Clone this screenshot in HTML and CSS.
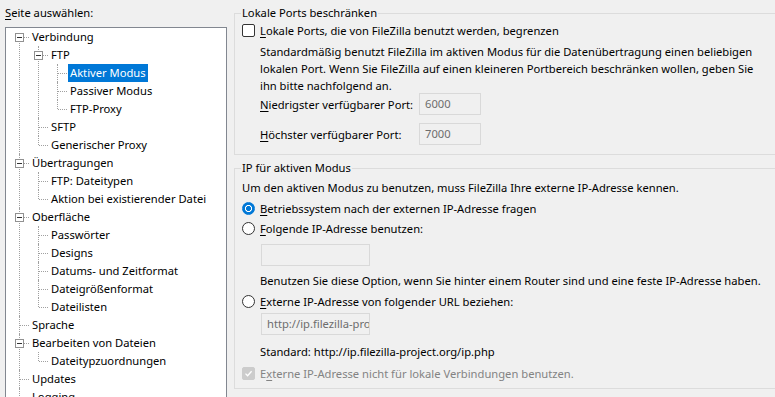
FILE: index.html
```html
<!DOCTYPE html>
<html lang="de">
<head>
    <meta charset="UTF-8">
    <title>Einstellungen - Aktiver Modus</title>
    <link rel="stylesheet" href="styles.css">
</head>
<body>
    <div class="window">
        <!-- Seitenauswahl -->
        <div class="side">
            <div class="side-label"><u>S</u>eite auswählen:</div>
            <div class="tree-box">
                <ul class="tree">
                    <li class="open"><span class="toggle"></span><span class="node">Verbindung</span>
                        <ul>
                            <li class="open"><span class="toggle"></span><span class="node">FTP</span>
                                <ul>
                                    <li><span class="node selected">Aktiver Modus</span></li>
                                    <li><span class="node">Passiver Modus</span></li>
                                    <li><span class="node">FTP-Proxy</span></li>
                                </ul>
                            </li>
                            <li><span class="node">SFTP</span></li>
                            <li><span class="node">Generischer Proxy</span></li>
                        </ul>
                    </li>
                    <li class="open"><span class="toggle"></span><span class="node">Übertragungen</span>
                        <ul>
                            <li><span class="node">FTP: Dateitypen</span></li>
                            <li><span class="node">Aktion bei existierender Datei</span></li>
                        </ul>
                    </li>
                    <li class="open"><span class="toggle"></span><span class="node">Oberfläche</span>
                        <ul>
                            <li><span class="node">Passwörter</span></li>
                            <li><span class="node">Designs</span></li>
                            <li><span class="node">Datums- und Zeitformat</span></li>
                            <li><span class="node">Dateigrößenformat</span></li>
                            <li><span class="node">Dateilisten</span></li>
                        </ul>
                    </li>
                    <li><span class="node">Sprache</span></li>
                    <li class="open"><span class="toggle"></span><span class="node">Bearbeiten von Dateien</span>
                        <ul>
                            <li><span class="node">Dateitypzuordnungen</span></li>
                        </ul>
                    </li>
                    <li><span class="node">Updates</span></li>
                    <li><span class="node">Logging</span></li>
                    <li><span class="node">Debug</span></li>
                </ul>
            </div>
        </div>

        <!-- Einstellungsseite -->
        <div class="page">
            <fieldset class="group ports">
                <legend>Lokale Ports beschränken</legend>
                <label class="option check-row">
                    <span class="checkbox"></span>
                    <span><u>L</u>okale Ports, die von FileZilla benutzt werden, begrenzen</span>
                </label>
                <p class="desc">Standardmäßig benutzt FileZilla im aktiven Modus für die Datenübertragung einen beliebigen lokalen Port. Wenn Sie FileZilla auf einen kleineren Portbereich beschränken wollen, geben Sie ihn bitte nachfolgend an.</p>
                <div class="port-row low">
                    <span class="port-label"><u>N</u>iedrigster verfügbarer Port:</span>
                    <span class="field port-field">6000</span>
                </div>
                <div class="port-row">
                    <span class="port-label"><u>H</u>öchster verfügbarer Port:</span>
                    <span class="field port-field">7000</span>
                </div>
            </fieldset>

            <fieldset class="group ip">
                <legend>IP für aktiven Modus</legend>
                <p class="intro">Um den aktiven Modus zu benutzen, muss FileZilla Ihre externe IP-Adresse kennen.</p>
                <label class="option radio-row first">
                    <span class="radio checked"></span>
                    <span><u>B</u>etriebssystem nach der externen IP-Adresse fragen</span>
                </label>
                <label class="option radio-row">
                    <span class="radio"></span>
                    <span><u>F</u>olgende IP-Adresse benutzen:</span>
                </label>
                <span class="field ip-field"></span>
                <p class="hint">Benutzen Sie diese Option, wenn Sie hinter einem Router sind und eine feste IP-Adresse haben.</p>
                <label class="option radio-row url-row">
                    <span class="radio"></span>
                    <span><u>E</u>xterne IP-Adresse von folgender URL beziehen:</span>
                </label>
                <span class="field ip-field url-field">http://ip.filezilla-project.org/ip.php</span>
                <p class="hint standard">Standard: http://ip.filezilla-project.org/ip.php</p>
                <label class="option check-row disabled">
                    <span class="checkbox checked">
                        <svg width="9" height="9" viewBox="0 0 9 9"><path d="M1.5 4.6 L3.6 6.7 L7.6 2.3" fill="none" stroke="#fff" stroke-width="1.3"/></svg>
                    </span>
                    <span>E<u>x</u>terne IP-Adresse nicht für lokale Verbindungen benutzen.</span>
                </label>
            </fieldset>
        </div>
    </div>
</body>
</html>
```

FILE: styles.css
```css
* {
    box-sizing: border-box;
}

body {
    margin: 0;
    background-color: #f0f0f0;
    font-family: "Noto Sans", sans-serif;
    font-size: 11.2px;
    color: #000;
    overflow: hidden;
    height: 397px;
}

u {
    text-decoration-thickness: 1px;
    text-underline-offset: 2px;
}

.window {
    display: flex;
    height: 397px;
}

/* left side: page tree */
.side {
    width: 234px;
    padding-left: 5px;
    flex-shrink: 0;
}

.side-label {
    height: 27px;
    line-height: 17px;
    padding-top: 4px;
}

.tree-box {
    width: 222px;
    height: 380px;
    background-color: #fff;
    border: 1px solid #828790;
    border-bottom: none;
    overflow: hidden;
}

.tree,
.tree ul {
    list-style: none;
    margin: 0;
    padding: 0;
}

.tree ul {
    margin-left: -5px;
}

.tree li {
    position: relative;
    padding-left: 24px;
}

/* dotted connector lines */
.tree li::before {
    content: "";
    position: absolute;
    left: 13px;
    top: 0;
    bottom: 0;
    border-left: 1px dotted #a0a0a0;
}

.tree li:last-child::before {
    bottom: auto;
    height: 9px;
}

.tree > li:first-child::before {
    top: 9px;
}

.tree li::after {
    content: "";
    position: absolute;
    left: 14px;
    top: 9px;
    width: 9px;
    border-top: 1px dotted #a0a0a0;
}

.toggle {
    position: absolute;
    left: 9px;
    top: 5px;
    width: 9px;
    height: 9px;
    background-color: #fff;
    border: 1px solid #919191;
    z-index: 1;
}

.toggle::after {
    content: "";
    position: absolute;
    left: 1px;
    top: 3px;
    width: 5px;
    height: 1px;
    background-color: #333;
}

.node {
    display: inline-block;
    height: 18px;
    line-height: 18px;
    padding: 0 2px;
    white-space: nowrap;
}

.node.selected {
    background-color: #0078d7;
    color: #fff;
}

/* right side: settings page */
.page {
    width: 545px;
    flex-shrink: 0;
    padding-top: 5px;
}

.group {
    margin: 0;
    border: 1px solid #dcdcdc;
    padding: 0 0 0 7px;
    display: flex;
    flex-direction: column;
}

.group legend {
    padding: 0 1px;
    margin-left: -1px;
    line-height: 16px;
}

.ports {
    height: 150px;
}

.ip {
    margin-top: 5px;
    height: 229px;
}

.option {
    display: flex;
    align-items: center;
    gap: 5px;
    height: 17px;
    line-height: 17px;
}

.check-row {
    margin-top: 1px;
}

.checkbox {
    width: 13px;
    height: 13px;
    border: 1px solid #333;
    border-radius: 2px;
    background-color: #fff;
    flex-shrink: 0;
}

.checkbox.checked {
    background-color: #cccccc;
    border-color: #cccccc;
    display: flex;
    align-items: center;
    justify-content: center;
}

.radio {
    width: 13px;
    height: 13px;
    border: 1px solid #333;
    border-radius: 50%;
    background-color: #fff;
    flex-shrink: 0;
}

.radio.checked {
    border-color: #0078d7;
    background: radial-gradient(circle, #0078d7 0 2.2px, #fff 2.7px 3.3px, #0078d7 3.8px);
}

.desc,
.intro,
.hint {
    margin: 0;
    line-height: 17px;
}

.desc {
    margin: 4px 0 0 18px;
    width: 500px;
}

.port-row {
    display: flex;
    align-items: center;
    margin-left: 18px;
    height: 22px;
    margin-top: 8px;
}

.port-row.low {
    margin-top: -1px;
}

.port-label {
    width: 159px;
}

.field {
    display: block;
    height: 22px;
    line-height: 20px;
    border: 1px solid #d9d9d9;
    background-color: #f0f0f0;
    color: #6d6d6d;
    padding: 0 5px;
    overflow: hidden;
    white-space: nowrap;
}

.port-field {
    width: 62px;
}

.intro {
    margin-top: 3px;
}

.radio-row {
    margin-top: 3px;
}

.radio-row.first {
    margin-top: 4px;
}

.ip-field {
    width: 109px;
    margin: 7px 0 0 19px;
}

.hint {
    margin: 6px 0 0 18px;
}

.radio-row.url-row {
    margin-top: 4px;
}

.url-field {
    margin-top: 3px;
}

.standard {
    margin-top: 8px;
}

.disabled {
    color: #838383;
    margin-top: 5px;
}
```
